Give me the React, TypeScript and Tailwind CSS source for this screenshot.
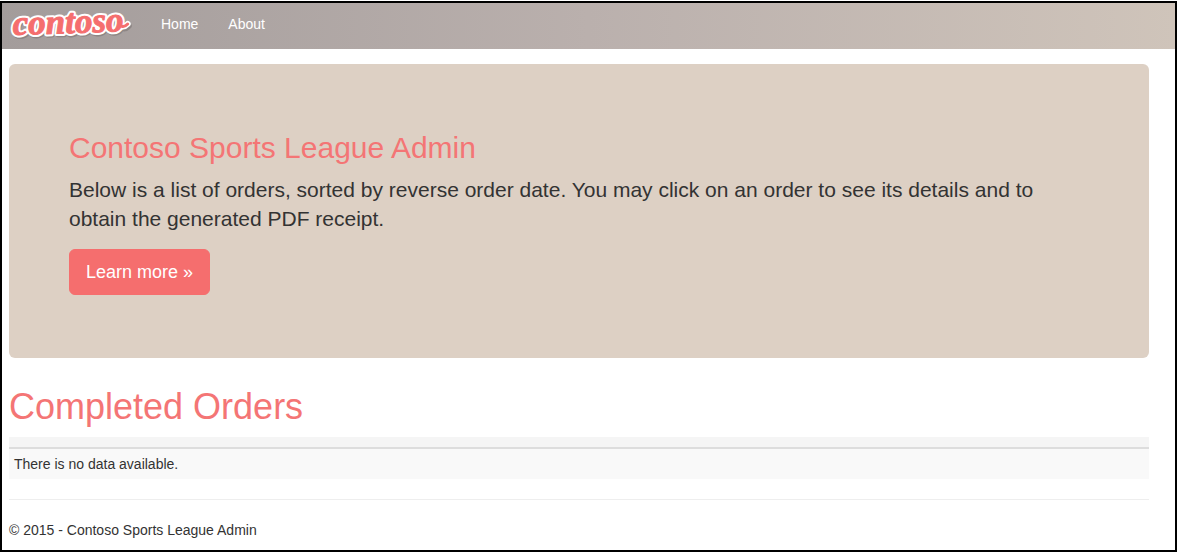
function Logo() {
  return (
    <svg width="126" height="36" viewBox="0 0 126 36" role="img" aria-label="contoso" className="block overflow-visible">
      <g
        transform="rotate(-2 62 26)"
        fontFamily="'Liberation Serif', serif"
        fontSize="35"
        fontWeight="700"
        fontStyle="italic"
        strokeLinejoin="round"
        strokeLinecap="round"
      >
        <g fill="#7d7675" stroke="#7d7675" strokeWidth="4" opacity="0.6">
          <text x="4" y="27">contoso</text>
          <path d="M113 22Q116 23 119 20" fill="none" strokeWidth="6" />
        </g>
        <g fill="#ffffff" stroke="#ffffff" strokeWidth="5">
          <text x="3" y="25">contoso</text>
          <path d="M112 20Q115 21 118 18" fill="none" strokeWidth="6" />
        </g>
        <g fill="#f56e6e" stroke="#f56e6e" strokeWidth="1">
          <text x="3" y="25">contoso</text>
          <path d="M112 20Q115 21 118 18" fill="none" strokeWidth="3" />
        </g>
      </g>
    </svg>
  );
}

export default function App() {
  return (
    <div className="bg-white pt-px pr-px font-['Liberation_Sans',Arial,sans-serif] text-sm text-[#333333]">
      <div className="border-2 border-black">
        <header className="flex h-[46px] items-center bg-linear-to-r from-[#a39c9b] via-[#bab0ad] to-[#cfc4ba] pl-2">
          <a href="#">
            <Logo />
          </a>
          <nav className="flex gap-[30px] pb-1 pl-[25px] text-white">
            <a href="#">Home</a>
            <a href="#">About</a>
          </nav>
        </header>

        <div className="pt-[15px] pr-[26px] pb-[10px] pl-[7px]">
          <section className="rounded-md bg-[#ddd0c4] px-[60px] pt-[67px] pb-[63px]">
            <h1 className="text-[30px] leading-[33px] text-[#f47575]">Contoso Sports League Admin</h1>
            <p className="mt-[11px] text-[21px] leading-[29px]">
              Below is a list of orders, sorted by reverse order date. You may click on an order to see its details and to
              obtain the generated PDF receipt.
            </p>
            <a
              href="#"
              className="mt-4 inline-block rounded-md border border-[#f56e6e] bg-[#f56e6e] px-4 py-[10px] align-top text-lg leading-6 text-white"
            >
              Learn more »
            </a>
          </section>

          <h2 className="mt-[29px] text-4xl leading-10 text-[#f47575]">Completed Orders</h2>
          <table className="mt-[10px] w-full border-collapse">
            <thead>
              <tr className="h-[11px] border-b-2 border-[#dddddd] bg-[#f5f5f5]">
                <th className="p-0" aria-label="Orders"></th>
              </tr>
            </thead>
            <tbody>
              <tr className="bg-[#f9f9f9]">
                <td className="p-[5px] leading-5">There is no data available.</td>
              </tr>
            </tbody>
          </table>

          <hr className="my-5 border-[#eeeeee]" />
          <footer>
            <p className="leading-5">© 2015 - Contoso Sports League Admin</p>
          </footer>
        </div>
      </div>
    </div>
  );
}
